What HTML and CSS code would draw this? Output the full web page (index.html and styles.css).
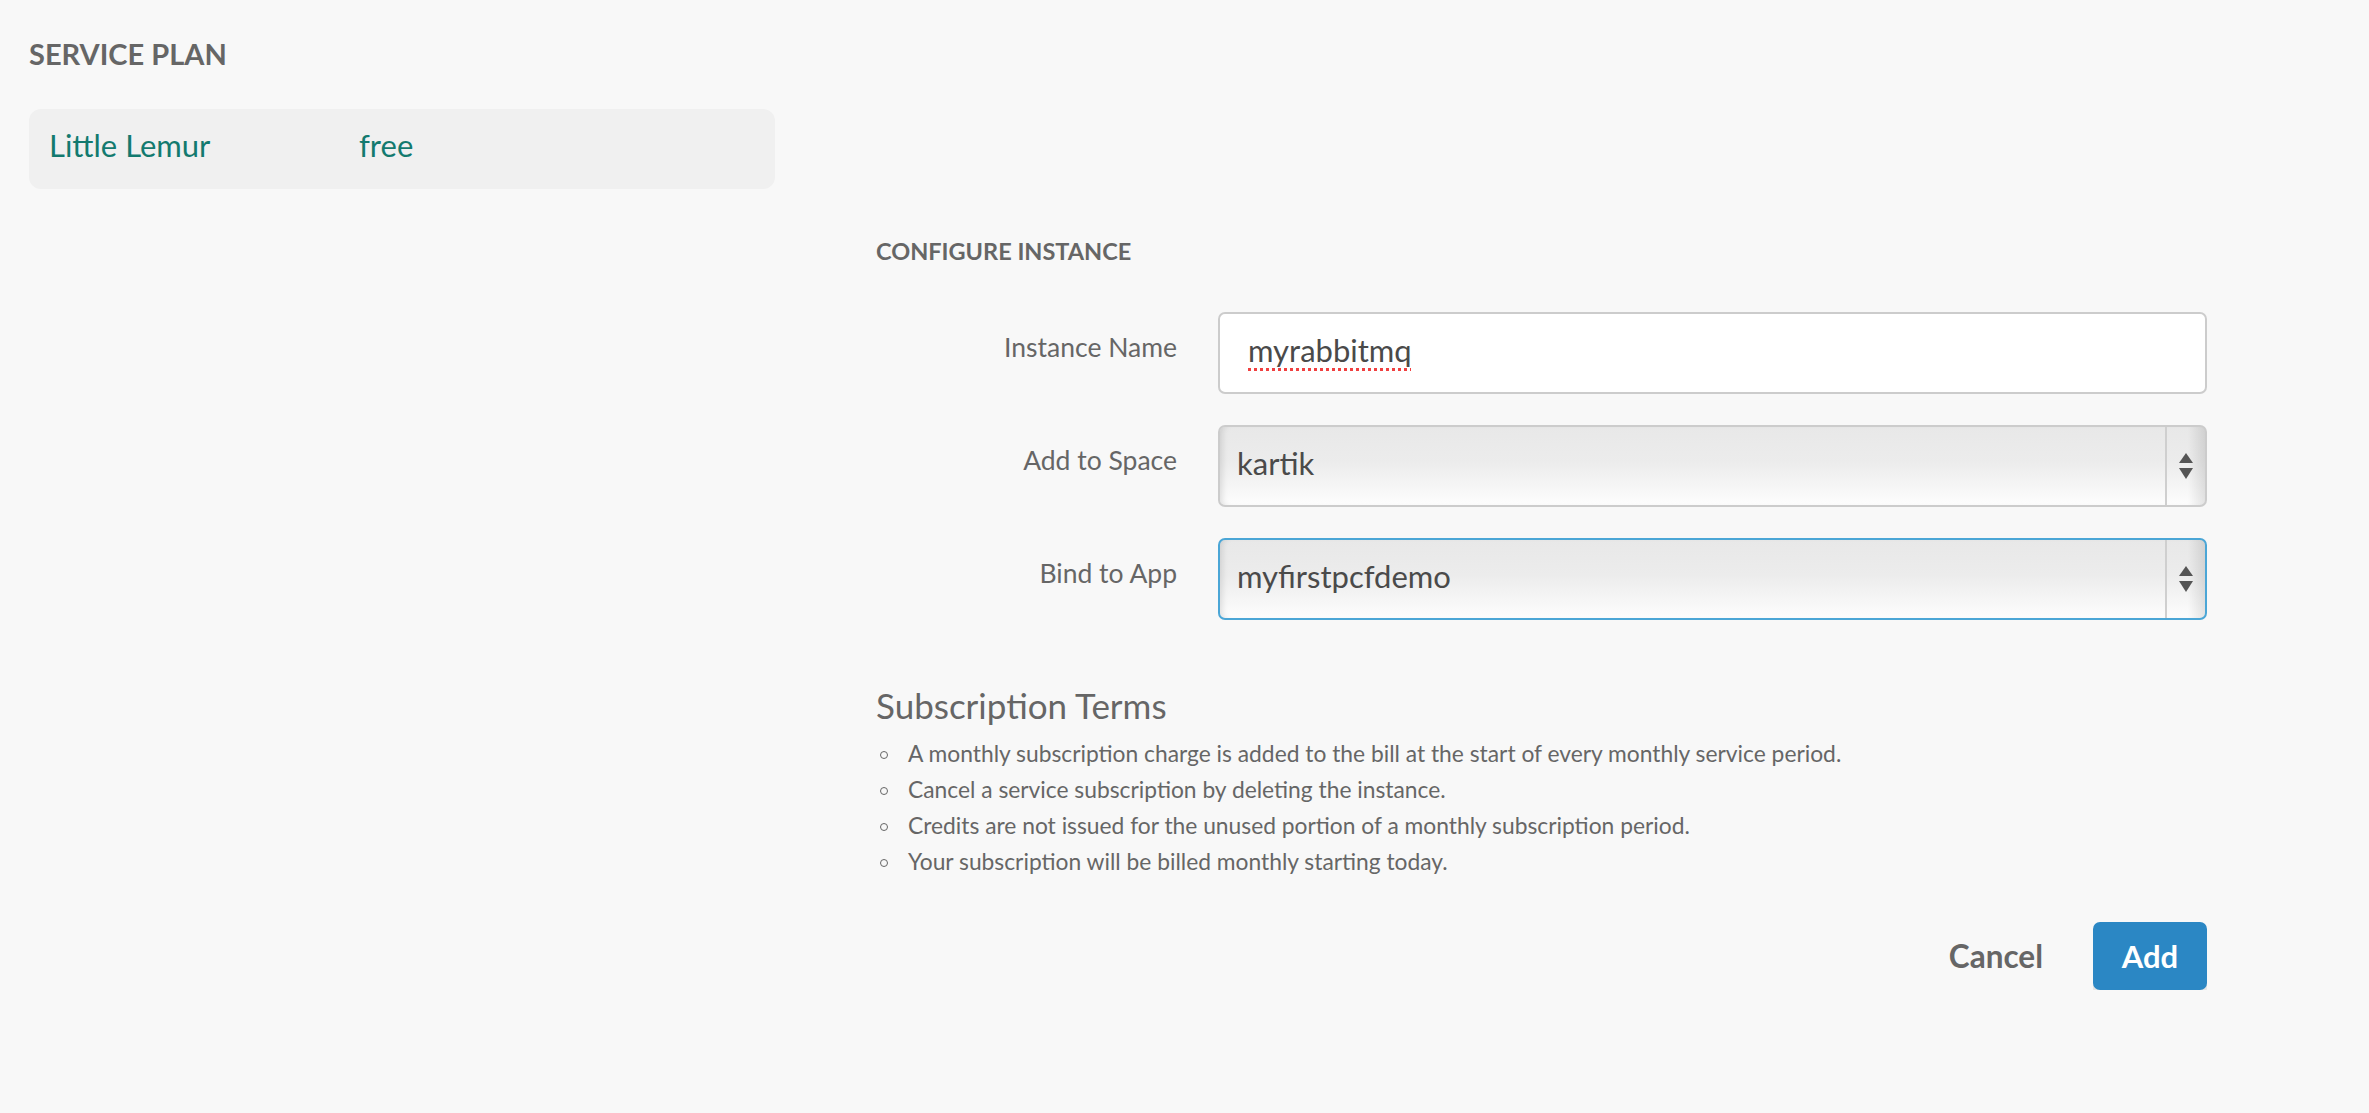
FILE: index.html
```html
<!DOCTYPE html>
<html lang="en">
<head>
<meta charset="utf-8">
<title>Configure Instance</title>
<link rel="stylesheet" href="styles.css">
</head>
<body>
<div class="page">
  <section class="plan-col">
    <h2 class="section-title">SERVICE PLAN</h2>
    <div class="plan-card">
      <span class="plan-name">Little Lemur</span>
      <span class="plan-price">free</span>
    </div>
  </section>
  <section class="config-col">
    <h3 class="config-title">CONFIGURE INSTANCE</h3>
    <div class="form">
      <div class="form-row">
        <div class="form-label">Instance Name</div>
        <div class="field field-text"><span class="misspelled">myrabbitmq</span></div>
      </div>
      <div class="form-row">
        <div class="form-label">Add to Space</div>
        <div class="field field-select">
          <span class="select-value">kartik</span>
          <span class="select-arrows"><span class="tri tri-up"></span><span class="tri tri-down"></span></span>
        </div>
      </div>
      <div class="form-row">
        <div class="form-label">Bind to App</div>
        <div class="field field-select is-focused">
          <span class="select-value">myfirstpcfdemo</span>
          <span class="select-arrows"><span class="tri tri-up"></span><span class="tri tri-down"></span></span>
        </div>
      </div>
    </div>
    <div class="terms">
      <h4 class="terms-title">Subscription Terms</h4>
      <ul class="terms-list">
        <li>A monthly subscription charge is added to the bill at the start of every monthly service period.</li>
        <li>Cancel a service subscription by deleting the instance.</li>
        <li>Credits are not issued for the unused portion of a monthly subscription period.</li>
        <li>Your subscription will be billed monthly starting today.</li>
      </ul>
    </div>
    <div class="actions">
      <button class="btn-cancel">Cancel</button>
      <button class="btn-add">Add</button>
    </div>
  </section>
</div>
</body>
</html>
```
FILE: styles.css
```css
html, body {
  margin: 0;
  padding: 0;
  background: #f8f8f8;
}
body {
  font-family: Lato, "Source Sans Pro", "Open Sans", sans-serif;
  color: #666;
}
.page {
  display: grid;
  grid-template-columns: 746px 1331px;
  column-gap: 101px;
  padding: 39px 29px 0;
}
.section-title {
  margin: 0;
  font-size: 29px;
  line-height: 1;
  font-weight: 700;
  color: #666;
}
.plan-card {
  box-sizing: border-box;
  margin-top: 41px;
  height: 80px;
  background: #f0f0f0;
  border-radius: 12px;
  display: flex;
  align-items: center;
  padding: 0 20px 7px;
  font-size: 31px;
  line-height: 1;
  color: #137a6f;
}
.plan-name {
  width: 310px;
}
.config-col {
  padding-top: 200px;
}
.config-title {
  margin: 0;
  font-size: 23.5px;
  line-height: 24px;
  font-weight: 700;
  color: #666;
}
.form {
  margin-top: 49px;
  display: flex;
  flex-direction: column;
  gap: 31px;
}
.form-row {
  display: flex;
  align-items: flex-start;
  gap: 41px;
}
.form-label {
  width: 301px;
  text-align: right;
  font-size: 26.5px;
  line-height: 1;
  padding-top: 22px;
  color: #666;
}
.field {
  box-sizing: border-box;
  width: 989px;
  height: 82px;
  border: 2px solid #cccccc;
  border-radius: 7px;
  font-size: 31px;
  line-height: 1;
  color: #4a4a4a;
}
.field-text {
  background: #fff;
  padding: 21px 0 0 28px;
}
.misspelled {
  text-decoration-line: underline;
  text-decoration-style: dotted;
  text-decoration-color: #f04040;
  text-decoration-thickness: 3px;
  text-underline-offset: 6px;
}
.field-select {
  display: flex;
  background: linear-gradient(#e8e8e8 0%, #ececec 45%, #fdfdfd 100%);
  box-shadow: inset 6px 0 6px -4px rgba(0,0,0,0.12);
  overflow: hidden;
}
.field-select.is-focused {
  border-color: #4ba6d6;
}
.select-value {
  flex: 1;
  padding: 21px 0 0 17px;
}
.select-arrows {
  width: 38px;
  border-left: 2px solid #cfcfcf;
  display: flex;
  flex-direction: column;
  align-items: center;
  justify-content: center;
  gap: 5px;
  background: linear-gradient(90deg, rgba(0,0,0,0) 55%, rgba(0,0,0,0.1) 100%);
}
.tri {
  width: 0;
  height: 0;
  border-left: 7px solid transparent;
  border-right: 7px solid transparent;
}
.tri-up {
  border-bottom: 10px solid #555;
}
.tri-down {
  border-top: 11px solid #555;
}
.terms {
  margin-top: 68px;
}
.terms-title {
  margin: 0;
  font-size: 35px;
  line-height: 1;
  font-weight: 400;
  color: #666;
}
.terms-list {
  list-style: none;
  margin: 12px 0 0;
  padding: 0;
}
.terms-list li {
  position: relative;
  padding-left: 32px;
  font-size: 22.8px;
  line-height: 36px;
  color: #666;
}
.terms-list li::before {
  content: "";
  position: absolute;
  left: 4px;
  top: 16px;
  width: 6px;
  height: 6px;
  border: 1.5px solid #666;
  border-radius: 50%;
}
.actions {
  margin-top: 43px;
  display: flex;
  justify-content: flex-end;
  align-items: center;
  gap: 50px;
}
.btn-cancel {
  border: 0;
  background: none;
  padding: 0;
  font-family: inherit;
  font-size: 31.5px;
  font-weight: 700;
  color: #666;
}
.btn-add {
  width: 114px;
  height: 68px;
  border: 0;
  border-radius: 7px;
  background: #2b87c4;
  color: #fff;
  font-family: inherit;
  font-size: 31px;
  font-weight: 700;
  box-shadow: 0 5px 0 #e6e6e6;
}
```
